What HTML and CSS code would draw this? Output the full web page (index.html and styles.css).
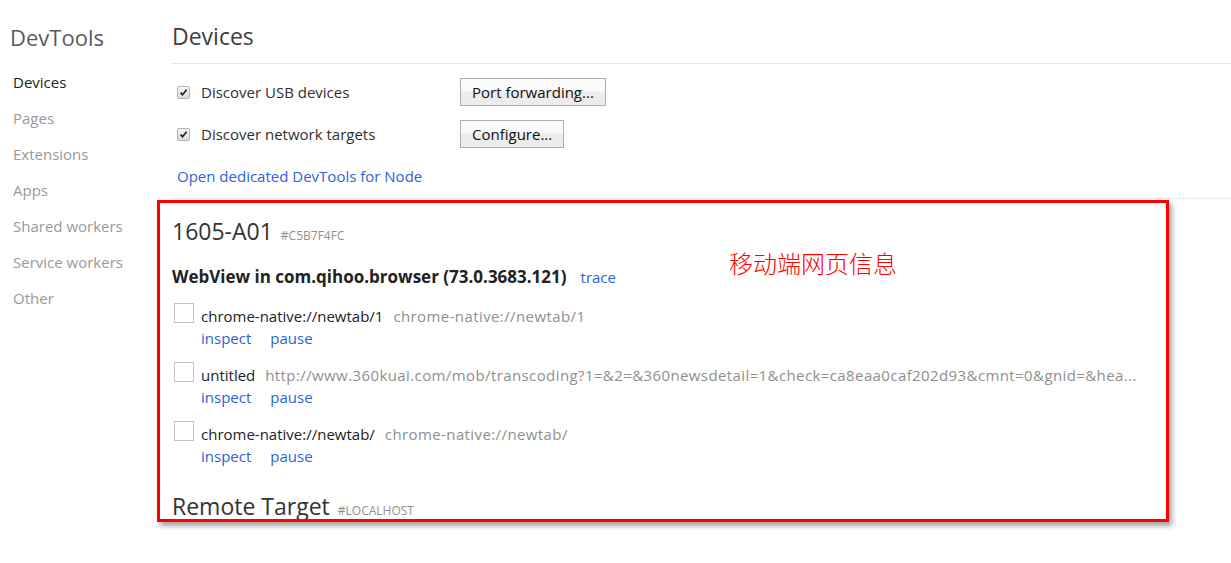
FILE: index.html
```html
<!DOCTYPE html>
<html lang="en">
<head>
<meta charset="utf-8">
<title>Inspect with Chrome Developer Tools</title>
<link rel="stylesheet" href="styles.css">
</head>
<body>
<div class="page">
  <aside class="sidebar">
    <div class="brand">DevTools</div>
    <nav class="nav">
      <div class="nav-item active">Devices</div>
      <div class="nav-item">Pages</div>
      <div class="nav-item">Extensions</div>
      <div class="nav-item">Apps</div>
      <div class="nav-item">Shared workers</div>
      <div class="nav-item">Service workers</div>
      <div class="nav-item">Other</div>
    </nav>
  </aside>
  <main class="main">
    <header class="main-header"><h1 class="title">Devices</h1></header>
    <div class="settings">
      <div class="setting-row">
        <label class="check"><span class="cb"><svg viewBox="0 0 13 13" width="13" height="13"><path d="M3 6.6 L5.3 9.2 L10.2 3.2" fill="none" stroke="#222" stroke-width="2"/></svg></span>Discover USB devices</label>
        <button class="btn">Port forwarding...</button>
      </div>
      <div class="setting-row">
        <label class="check"><span class="cb"><svg viewBox="0 0 13 13" width="13" height="13"><path d="M3 6.6 L5.3 9.2 L10.2 3.2" fill="none" stroke="#222" stroke-width="2"/></svg></span>Discover network targets</label>
        <button class="btn">Configure...</button>
      </div>
      <a class="link node-link">Open dedicated DevTools for Node</a>
    </div>
    <section class="device">
      <div class="device-header"><span class="device-name">1605-A01</span><span class="device-serial">#C5B7F4FC</span></div>
      <div class="browser-header"><span class="browser-name">WebView in com.qihoo.browser (73.0.3683.121)</span><a class="link">trace</a></div>
      <div class="target">
        <div class="target-line"><span class="thumb"></span><span class="t-name">chrome-native://newtab/1</span><span class="t-url">chrome-native://newtab/1</span></div>
        <div class="actions"><a class="link">inspect</a><a class="link">pause</a></div>
      </div>
      <div class="target">
        <div class="target-line"><span class="thumb"></span><span class="t-name">untitled</span><span class="t-url">http://www.360kuai.com/mob/transcoding?1=&amp;2=&amp;360newsdetail=1&amp;check=ca8eaa0caf202d93&amp;cmnt=0&amp;gnid=&amp;hea...</span></div>
        <div class="actions"><a class="link">inspect</a><a class="link">pause</a></div>
      </div>
      <div class="target">
        <div class="target-line"><span class="thumb"></span><span class="t-name">chrome-native://newtab/</span><span class="t-url">chrome-native://newtab/</span></div>
        <div class="actions"><a class="link">inspect</a><a class="link">pause</a></div>
      </div>
    </section>
    <section class="device remote">
      <div class="device-header"><span class="device-name">Remote Target</span><span class="device-serial">#LOCALHOST</span></div>
    </section>
    <div class="annotation"><span class="note">移动端网页信息</span></div>
  </main>
</div>
</body>
</html>
```
FILE: styles.css
```css
html, body {
  margin: 0;
  padding: 0;
  background: #fff;
}
body {
  font-family: "Open Sans", "Noto Sans", sans-serif;
  font-size: 15px;
  color: #303030;
  height: 563px;
  overflow: hidden;
}
.page {
  display: flex;
}
.sidebar {
  width: 172px;
  flex: none;
}
.brand {
  font-size: 22px;
  color: #5a5a5a;
  padding: 22px 0 0 10px;
  height: 35px;
  line-height: 30px;
}
.nav {
  display: flex;
  flex-direction: column;
  padding: 7px 0 0 13px;
}
.nav-item {
  height: 36px;
  line-height: 36px;
  color: #999;
}
.nav-item.active {
  color: #222;
}
.main {
  flex: 1;
  min-width: 0;
  position: relative;
}
.main-header {
  height: 64px;
  border-bottom: 1px solid #e8e8e8;
  box-sizing: border-box;
}
.title {
  margin: 0;
  font-weight: normal;
  font-size: 23px;
  color: #404040;
  padding-top: 21px;
  line-height: 30px;
}
.settings {
  padding: 14px 0 8px 0;
  border-bottom: 1px solid #e8e8e8;
  display: flex;
  flex-direction: column;
  gap: 14px;
}
.setting-row {
  display: flex;
  align-items: center;
  height: 28px;
}
.check {
  width: 288px;
  display: flex;
  align-items: center;
  color: #303030;
}
.cb {
  width: 13px;
  height: 13px;
  margin: 0 11px 0 5px;
  border: 1px solid #b4b4b4;
  border-radius: 2px;
  box-sizing: border-box;
  background: linear-gradient(#f4f4f4, #dcdcdc);
  display: flex;
  align-items: center;
  justify-content: center;
}
.cb svg { display: block; }
.btn {
  height: 28px;
  padding: 0 11px;
  font-family: "Open Sans", "Noto Sans", sans-serif;
  font-size: 15px;
  color: #111;
  border: 1px solid #adadad;
  background: linear-gradient(#fbfbfb 0%, #fbfbfb 45%, #ececec 50%, #ececec 100%);
  border-radius: 0;
  line-height: 26px;
}
.link {
  color: #2d62d8;
  text-decoration: none;
  cursor: pointer;
}
.node-link {
  margin-left: 5px;
  height: 28px;
  line-height: 28px;
}
.device {
  padding: 16px 0 0 0;
}
.device-header {
  display: flex;
  align-items: baseline;
  gap: 8px;
  height: 32px;
}
.device-name {
  font-size: 23px;
  color: #333;
  line-height: 32px;
}
.device-serial {
  font-size: 12px;
  color: #8f8f8f;
  text-transform: uppercase;
}
.browser-header {
  display: flex;
  align-items: baseline;
  gap: 14px;
  margin-top: 17px;
  height: 26px;
  line-height: 26px;
}
.browser-name {
  font-weight: bold;
  font-size: 17px;
  color: #222;
}
.target {
  display: flex;
  flex-direction: column;
  margin-top: 14px;
}
.target + .target {
  margin-top: 13px;
}
.target-line {
  display: flex;
  align-items: center;
  height: 23px;
  padding-right: 60px;
}
.thumb {
  flex: none;
  width: 20px;
  height: 20px;
  border: 1px solid #c4c4c4;
  box-sizing: border-box;
  margin: -5px 7px 0 2px;
}
.t-name {
  flex: none;
  color: #222;
  margin-right: 10px;
}
.t-url {
  flex: 0 1 auto;
  color: #8f8f8f;
  letter-spacing: 0.4px;
  white-space: nowrap;
  overflow: hidden;
  min-width: 0;
}
.actions {
  display: flex;
  gap: 19px;
  padding-left: 29px;
  height: 23px;
  line-height: 23px;
}
.remote {
  padding-top: 22px;
}
.annotation {
  position: absolute;
  left: -15px;
  top: 200px;
  width: 1012px;
  height: 322px;
  box-sizing: border-box;
  border: 3px solid #ff0000;
  box-shadow: 3px 4px 5px rgba(0, 0, 0, 0.35);
  pointer-events: none;
}
.note {
  position: absolute;
  left: 569px;
  top: 42px;
  font-family: "Noto Sans CJK SC", sans-serif;
  font-size: 24px;
  font-weight: 300;
  color: #ff0000;
}
```
